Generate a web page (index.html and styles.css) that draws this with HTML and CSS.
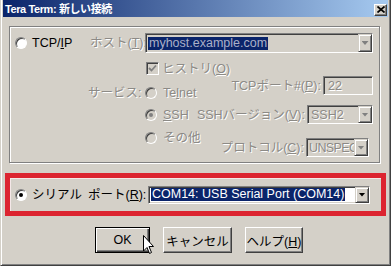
FILE: index.html
```html
<!DOCTYPE html>
<html lang="ja">
<head>
    <meta charset="UTF-8">
    <meta name="viewport" content="width=device-width, initial-scale=1.0">
    <title>Tera Term: 新しい接続</title>
    <link rel="stylesheet" href="styles.css">
</head>
<body>
    <div class="window">
        <div class="titlebar">
            <span class="title">Tera Term: 新しい接続</span>
            <span class="close">
                <svg width="8" height="7" viewBox="0 0 8 7">
                    <path d="M0.5,0.5 L7.5,6.5 M7.5,0.5 L0.5,6.5" stroke="#000" stroke-width="1.7"/>
                </svg>
            </span>
        </div>

        <div class="content">
            <!-- TCP/IP group -->
            <div class="group">
                <div class="row row-host">
                    <span class="choice tcp"><span class="radio"></span>TCP/<u>I</u>P</span>
                    <span class="host-label dis">ホスト(<u>T</u>):</span>
                    <span class="field host-combo">
                        <span class="value"><span class="sel off">myhost.example.com</span></span>
                        <span class="drop off"></span>
                    </span>
                </div>

                <div class="row row-history">
                    <span class="check">
                        <svg width="9" height="9" viewBox="0 0 9 9">
                            <path d="M1,4 L3.5,6.5 L8,1.5" fill="none" stroke="#808080" stroke-width="1.8"/>
                        </svg>
                    </span>
                    <span class="dis">ヒストリ(<u>O</u>)</span>
                </div>

                <div class="row row-service">
                    <div class="left left-bottom">
                        <span class="service-label dis">サービス:</span>
                        <span class="radio off"></span><span class="dis">Te<u>l</u>net</span>
                    </div>
                    <div class="right right-top">
                        <span class="side-label dis">TCPポート#(<u>P</u>):</span>
                        <span class="field port"><span class="value dis">22</span></span>
                    </div>
                </div>

                <div class="row row-ssh">
                    <div class="left">
                        <span class="radio off on"></span><span class="dis"><u>S</u>SH</span>
                    </div>
                    <div class="right">
                        <span class="side-label dis">SSHバージョン(<u>V</u>):</span>
                        <span class="field ssh-combo">
                            <span class="value dis">SSH2</span>
                            <span class="drop off"></span>
                        </span>
                    </div>
                </div>

                <div class="row row-other">
                    <div class="left left-top">
                        <span class="radio off"></span><span class="dis">その他</span>
                    </div>
                    <div class="right right-bottom">
                        <span class="side-label dis">プロトコル(<u>C</u>):</span>
                        <span class="field proto-combo">
                            <span class="value dis">UNSPEC</span>
                            <span class="drop off"></span>
                        </span>
                    </div>
                </div>
            </div>

            <!-- Serial -->
            <div class="serial">
                <span class="choice serial-choice"><span class="radio on"></span>シリアル</span>
                <span class="port-label">ポート(<u>R</u>):</span>
                <span class="field com-combo">
                    <span class="value"><span class="sel">COM14: USB Serial Port (COM14)</span></span>
                    <span class="drop"></span>
                </span>
            </div>

            <div class="buttons">
                <button class="btn btn-ok">OK</button>
                <button class="btn btn-cancel">キャンセル</button>
                <button class="btn btn-help">ヘルプ(<u>H</u>)</button>
            </div>
        </div>

        <svg class="cursor" width="12" height="20" viewBox="0 0 12 20">
            <path d="M0.5,0.5 L0.5,16 L4,12.5 L6.5,18.5 L8.5,17.5 L6,11.5 L10.5,11.5 Z" fill="#fff" stroke="#000" stroke-width="1"/>
        </svg>
    </div>
</body>
</html>
```

FILE: styles.css
```css
body {
    margin: 0;
    background: #d4d0c8;
    font-family: "Liberation Sans", "Noto Sans CJK JP", sans-serif;
    font-size: 12.5px;
    line-height: 14px;
    color: #000;
    white-space: nowrap;
}
.window {
    position: relative;
    width: 391px;
    height: 266px;
    box-sizing: border-box;
    border: 1px solid;
    border-color: #d4d0c8 #404040 #404040 #d4d0c8;
    border-top: 0;
    box-shadow: inset 1px 0 #fff, inset -1px -1px #808080;
    padding: 0 2px 2px;
    overflow: hidden;
}
.titlebar {
    height: 17px;
    display: flex;
    align-items: center;
    justify-content: space-between;
    background: linear-gradient(to right, #0a246a, #a6caf0);
    padding: 0 1px 0 2px;
}
.title {
    color: #fff;
    font-weight: bold;
    font-size: 11px;
    letter-spacing: -0.4px;
}
.close {
    width: 13px;
    height: 12px;
    margin-top: 2px;
    box-sizing: border-box;
    background: #d4d0c8;
    border: 1px solid;
    border-color: #fff #404040 #404040 #fff;
    box-shadow: inset -1px -1px #808080;
    display: flex;
    align-items: center;
    justify-content: center;
}
.content {
    padding-left: 6px;
}
u {
    text-decoration: underline;
    text-underline-offset: 1px;
}
.dis {
    color: #8c8a86;
    text-shadow: 1px 1px 0 #fff;
}

/* group box */
.group {
    width: 371px;
    height: 137px;
    margin-top: 9px;
    box-sizing: border-box;
    border: 1px solid #808080;
    box-shadow: inset 1px 1px #fff, 1px 1px #fff;
    padding-right: 6px;
}
.row {
    display: flex;
    align-items: center;
}
.row-host {
    height: 20px;
    margin-top: 6px;
}
.row-history {
    height: 13px;
    margin-top: 9px;
    padding-left: 136px;
}
.row-service {
    height: 24px;
    margin-top: 1px;
    align-items: stretch;
}
.row-ssh {
    height: 19px;
    margin-top: 5px;
}
.row-other {
    height: 26px;
    margin-top: 7px;
    align-items: stretch;
}
.left {
    display: flex;
    align-items: center;
    height: 14px;
    padding-left: 135px;
}
.left-bottom {
    align-self: flex-end;
    padding-left: 78px;
}
.left-top {
    align-self: flex-start;
}
.service-label {
    width: 57px;
}
.right {
    display: flex;
    align-items: center;
    margin-left: auto;
}
.right-top {
    align-self: flex-start;
}
.right-bottom {
    align-self: flex-end;
}
.side-label {
    margin-right: 2px;
}

/* radio buttons and checkbox */
.choice {
    display: flex;
    align-items: center;
    box-sizing: border-box;
    padding-left: 5px;
}
.tcp {
    width: 80px;
}
.radio {
    position: relative;
    width: 12px;
    height: 12px;
    box-sizing: border-box;
    border-radius: 50%;
    border: 1px solid;
    border-color: #808080 #fff #fff #808080;
    box-shadow: inset 1px 1px #404040;
    background: #fff;
    margin-right: 6px;
    flex-shrink: 0;
}
.choice .radio {
    margin-right: 5px;
}
.radio.off {
    background: #d4d0c8;
}
.radio.on::after {
    content: "";
    position: absolute;
    left: 3px;
    top: 3px;
    width: 4px;
    height: 4px;
    border-radius: 50%;
    background: #000;
}
.radio.off.on::after {
    background: #808080;
}
.check {
    width: 13px;
    height: 13px;
    box-sizing: border-box;
    border: 1px solid;
    border-color: #808080 #fff #fff #808080;
    box-shadow: inset 1px 1px #404040;
    background: #d4d0c8;
    display: flex;
    align-items: center;
    justify-content: center;
    margin-right: 3px;
}
.host-label {
    width: 55px;
    flex-shrink: 0;
}

/* edit and combo boxes */
.field {
    display: flex;
    flex-shrink: 0;
    box-sizing: border-box;
    border: 1px solid;
    border-color: #808080 #fff #fff #808080;
    box-shadow: inset 1px 1px #404040, inset -1px -1px #d4d0c8;
    background: #d4d0c8;
    padding: 2px;
    overflow: hidden;
}
.value {
    flex: 1;
    min-width: 0;
    display: flex;
    align-items: center;
    overflow: visible;
    padding-left: 1px;
}
.sel {
    background: #0a246a;
    color: #fff;
    padding: 0 1px;
    line-height: 13px;
}
.sel.off {
    color: #aab0c8;
    margin-left: -1px;
}
.drop {
    position: relative;
    width: 14px;
    flex-shrink: 0;
    box-sizing: border-box;
    background: #d4d0c8;
    border: 1px solid;
    border-color: #d4d0c8 #404040 #404040 #d4d0c8;
    box-shadow: inset 1px 1px #fff, inset -1px -1px #808080;
    display: flex;
    align-items: center;
    justify-content: center;
    margin: -2px -2px -2px 0;
}
.drop::after {
    content: "";
    width: 7px;
    height: 4px;
    background: #000;
    clip-path: polygon(0 0, 100% 0, 50% 100%);
}
.drop.off::after {
    background: #808080;
    filter: drop-shadow(1px 1px 0 #fff);
}
.host-combo {
    width: 228px;
    height: 20px;
}
.port {
    width: 50px;
    height: 19px;
}
.port .value {
    padding-left: 2px;
}
.ssh-combo {
    width: 66px;
    height: 19px;
}
.proto-combo {
    width: 63px;
    height: 19px;
    margin-right: 4px;
}
.proto-combo .value {
    padding-left: 0;
    letter-spacing: -0.6px;
}

/* serial box */
.serial {
    display: flex;
    align-items: center;
    width: 381px;
    height: 43px;
    margin-top: 10px;
    margin-left: -4px;
    box-sizing: border-box;
    border: 5px solid #dc2430;
    box-shadow: inset 1px 1px #f4e8e8;
}
.serial-choice {
    width: 78px;
}
.port-label {
    width: 60px;
}
.com-combo {
    width: 222px;
    height: 18px;
    background: #fff;
}
.com-combo .value {
    padding-left: 0;
}

/* buttons */
.buttons {
    display: flex;
    gap: 13px;
    margin-top: 11px;
    margin-left: 86px;
}
.btn {
    height: 26px;
    box-sizing: border-box;
    font-family: inherit;
    font-size: 12.5px;
    color: #000;
    background: #d4d0c8;
    border: 1px solid;
    border-color: #fff #404040 #404040 #fff;
    box-shadow: inset -1px -1px #808080;
    padding: 0;
}
.btn-ok {
    width: 55px;
    border: 1px solid #000;
    box-shadow: inset 1px 1px #fff, inset -1px -1px #404040, inset -2px -2px #808080;
}
.btn-cancel {
    width: 69px;
}
.btn-help {
    width: 58px;
}
.cursor {
    position: absolute;
    left: 142px;
    top: 235px;
}
```
